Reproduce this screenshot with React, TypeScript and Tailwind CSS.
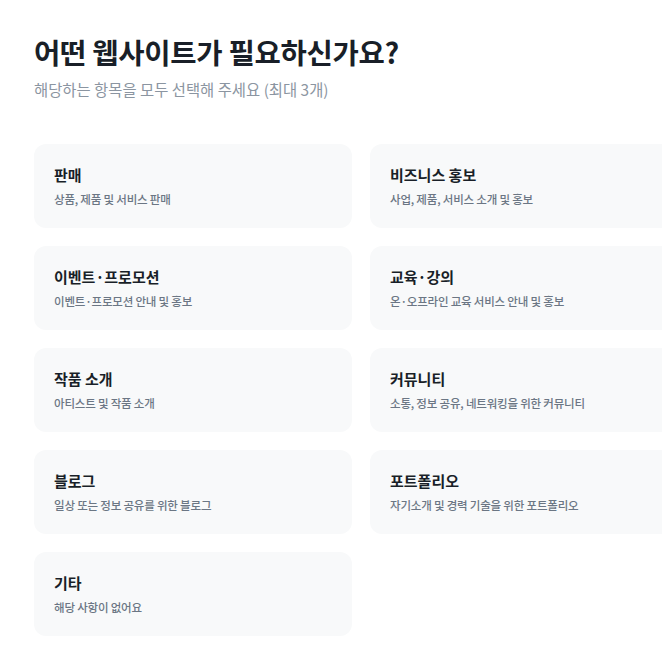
import React from "react";

const items: [string, string][] = [
  ["판매", "상품, 제품 및 서비스 판매"],
  ["비즈니스 홍보", "사업, 제품, 서비스 소개 및 홍보"],
  ["이벤트·프로모션", "이벤트·프로모션 안내 및 홍보"],
  ["교육·강의", "온·오프라인 교육 서비스 안내 및 홍보"],
  ["작품 소개", "아티스트 및 작품 소개"],
  ["커뮤니티", "소통, 정보 공유, 네트워킹을 위한 커뮤니티"],
  ["블로그", "일상 또는 정보 공유를 위한 블로그"],
  ["포트폴리오", "자기소개 및 경력 기술을 위한 포트폴리오"],
  ["기타", "해당 사항이 없어요"],
];

export default function App() {
  return (
    <div
      className="w-[662px] h-[652px] overflow-hidden bg-white"
      style={{ fontFamily: '"Noto Sans CJK KR", "Noto Sans", sans-serif' }}
    >
      <div className="pl-[34px] pt-[34px]">
        <h1 className="text-[28.6px] leading-[36px] font-bold text-[#191f28] tracking-[-0.3px]">
          어떤 웹사이트가 필요하신가요?
        </h1>
        <p className="mt-[8px] text-[15.4px] leading-[22px] text-[#8b95a1]">
          해당하는 항목을 모두 선택해 주세요 (최대 3개)
        </p>
        <div className="mt-[44px] grid grid-cols-[318px_318px] gap-[18px] w-[654px]">
          {items.map(([t, d]) => (
            <div
              key={t}
              className="h-[84px] rounded-[12px] bg-[#f8f9fa] pl-[20px] pt-[20px]"
            >
              <div className="text-[15px] leading-[22px] font-bold text-[#191f28]">{t}</div>
              <div className="mt-[4px] text-[11.5px] leading-[18px] font-medium tracking-[-0.2px] text-[#6b7684]">{d}</div>
            </div>
          ))}
        </div>
      </div>
    </div>
  );
}
